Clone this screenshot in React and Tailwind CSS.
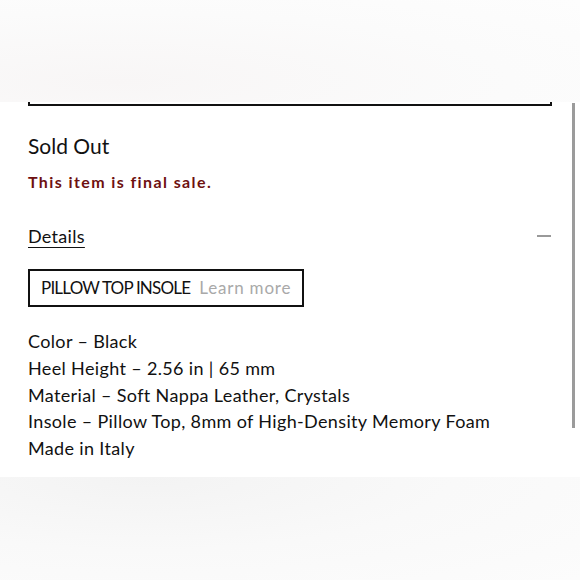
import React from "react";

export default function App() {
  const lines = [
    "Color – Black",
    "Heel Height – 2.56 in | 65 mm",
    "Material – Soft Nappa Leather, Crystals",
    "Insole – Pillow Top, 8mm of High-Density Memory Foam",
    "Made in Italy",
  ];
  return (
    <div className="w-[580px] h-[580px] overflow-hidden flex flex-col bg-white" style={{ fontFamily: "Lato, 'Liberation Sans', sans-serif" }}>
      <div className="h-[102px] shrink-0 bg-[radial-gradient(ellipse_at_20%_80%,#f8f6f6,#fbfbfb_60%,#fdfdfd)]" />
      <div className="relative flex-1 flex flex-col">
        <div className="absolute right-[5px] top-[1px] w-[3px] h-[325px] bg-[#9b9b9b]" />
        <div className="mx-[28px] mr-[28px] h-[4px] border-x-2 border-b-2 border-[#111]" />
        <div className="px-[28px] flex flex-col">
          <div className="mt-[27px] text-[21px] leading-[26px] text-[#111] tracking-[0px]">Sold Out</div>
          <div className="mt-[13px] text-[16px] leading-[20px] font-bold text-[#6e1010] tracking-[1.4px]">This item is final sale.</div>
          <div className="mt-[33px] flex items-center justify-between">
            <span className="text-[18px] leading-[22px] underline underline-offset-[4px] decoration-[1px] tracking-[0.3px] text-[#111]">Details</span>
            <span className="w-[14px] h-[1.5px] bg-[#999] mr-[1px]" />
          </div>
          <div className="mt-[22px] self-start flex items-center h-[38px] border-2 border-[#111] pl-[11px] pr-[11px]">
            <span className="text-[17px] tracking-[-0.8px] text-[#111]">PILLOW TOP INSOLE</span>
            <span className="ml-[9px] text-[17px] tracking-[0.8px] text-[#a9a9a9]">Learn more</span>
          </div>
          <div className="mt-[21px] flex flex-col text-[18px] leading-[26.8px] tracking-[0.35px] text-[#111]">
            {lines.map((l) => (
              <div key={l}>{l}</div>
            ))}
          </div>
        </div>
      </div>
      <div className="h-[103px] shrink-0 bg-[radial-gradient(ellipse_at_25%_0%,#f3f3f3,#f9f9f9_50%,#fcfcfc)]" />
    </div>
  );
}
